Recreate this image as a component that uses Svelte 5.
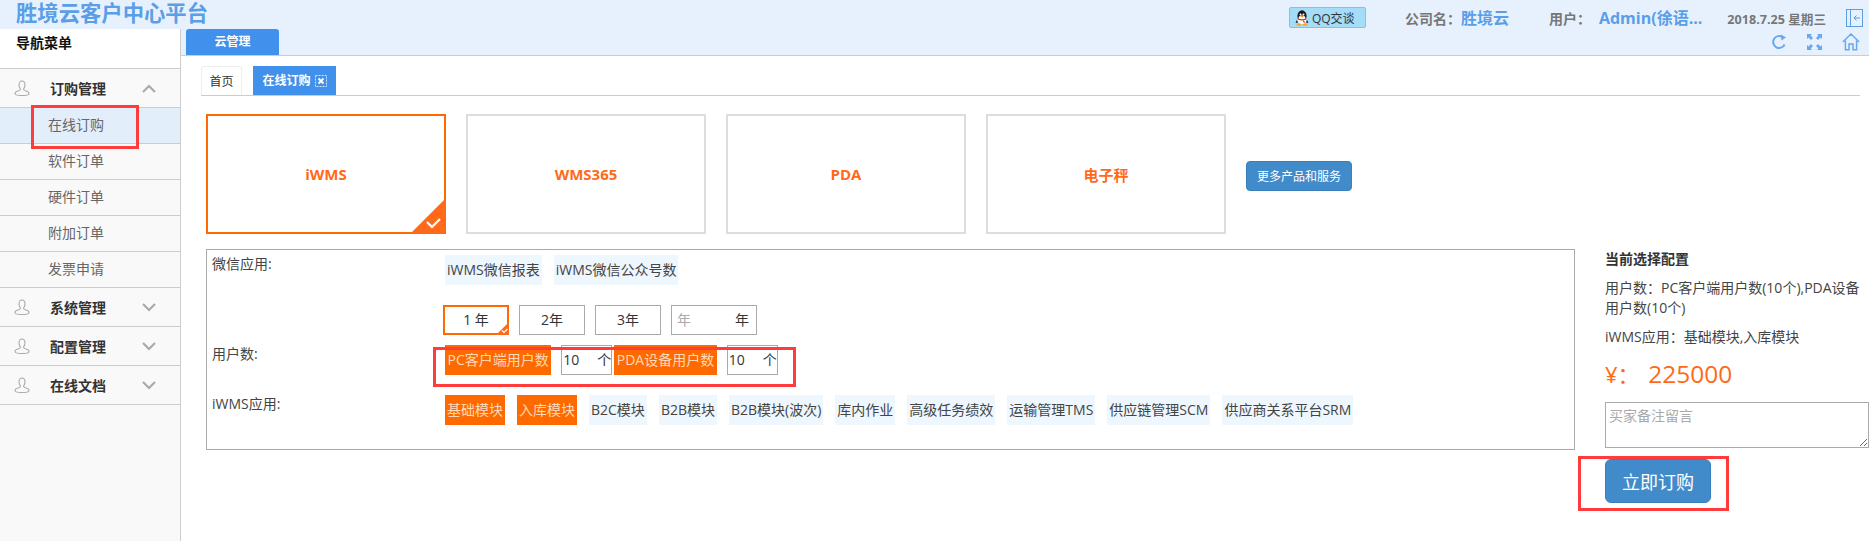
<script>
  const menu = [
    { label: '订购管理', open: true, items: ['在线订购', '软件订单', '硬件订单', '附加订单', '发票申请'] },
    { label: '系统管理', open: false, items: [] },
    { label: '配置管理', open: false, items: [] },
    { label: '在线文档', open: false, items: [] },
  ]
  const products = ['iWMS', 'WMS365', 'PDA', '电子秤']
  const wechat = ['iWMS微信报表', 'iWMS微信公众号数']
  const modules = [
    { name: '基础模块', on: true },
    { name: '入库模块', on: true },
    { name: 'B2C模块' },
    { name: 'B2B模块' },
    { name: 'B2B模块(波次)' },
    { name: '库内作业' },
    { name: '高级任务绩效' },
    { name: '运输管理TMS' },
    { name: '供应链管理SCM' },
    { name: '供应商关系平台SRM' },
  ]
</script>

<div class="app">
  <header class="topbar">
    <h1 class="brand">胜境云客户中心平台</h1>
    <div class="topinfo">
      <button class="qq">
        <svg width="14" height="16" viewBox="0 0 14 16">
          <ellipse cx="7" cy="6" rx="4.6" ry="5.8" fill="#1a1a1a" />
          <ellipse cx="7" cy="10" rx="3.8" ry="4.4" fill="#fff" />
          <path d="M1.8 10 L.6 13 L3 12.6 Z M12.2 10 L13.4 13 L11 12.6 Z" fill="#1a1a1a" />
          <path d="M2.6 8 Q7 10.4 11.4 8 L11.2 9.6 Q7 11.6 2.8 9.6 Z M8.6 10 L10.4 13 L8 12 Z" fill="#e02a1c" />
          <ellipse cx="4" cy="14.6" rx="2.6" ry="1.2" fill="#f5a623" />
          <ellipse cx="10" cy="14.6" rx="2.6" ry="1.2" fill="#f5a623" />
          <circle cx="5.5" cy="4.6" r="1" fill="#fff" />
          <circle cx="8.5" cy="4.6" r="1" fill="#fff" />
          <ellipse cx="7" cy="6.6" rx="1.6" ry=".8" fill="#f5a623" />
        </svg>
        QQ交谈
      </button>
      <span class="key company">公司名：</span><span class="val">胜境云</span>
      <span class="key user">用户：</span><span class="val admin">Admin(徐语...</span>
      <span class="date">2018.7.25 星期三</span>
      <svg class="logout" width="17" height="18" viewBox="0 0 17 18" fill="none" stroke="#5b9ee8">
        <rect x=".5" y=".5" width="16" height="17" />
        <path d="M4.5 .5 V17.5" />
        <path d="M14 9 H8 M10.5 6.5 L8 9 L10.5 11.5" />
      </svg>
    </div>
  </header>

  <aside class="sidebar">
    <div class="nav-title">导航菜单</div>
    {#each menu as group}
      <div class="group">
        <svg class="person" width="16" height="16" viewBox="0 0 16 16" fill="none" stroke="#aaa" stroke-width="1.1">
          <path d="M5 5 C5 2.6 6.2 1 8 1 C9.8 1 11 2.6 11 5 C11 7 10 8 9.6 9 C9.4 10 10.4 10.6 12 11 C14 11.5 15 12.2 15 13.4 C15 15 12 15.5 8 15.5 C4 15.5 1 15 1 13.4 C1 12.2 2 11.5 4 11 C5.6 10.6 6.6 10 6.4 9 C6 8 5 7 5 5 Z" />
        </svg>
        <span class="group-label">{group.label}</span>
        <svg class="chev" width="14" height="9" viewBox="0 0 14 9" fill="none" stroke="#aaa" stroke-width="2.2">
          {#if group.open}
            <path d="M1 8 L7 2 L13 8" />
          {:else}
            <path d="M1 1 L7 7 L13 1" />
          {/if}
        </svg>
      </div>
      {#each group.items as item, i}
        <div class="subitem" class:active={i === 0}>{item}</div>
      {/each}
    {/each}
    <div class="mark mark-nav"></div>
  </aside>

  <main class="main">
    <div class="tabbar">
      <div class="tab">云管理</div>
      <div class="tools">
        <svg width="16" height="16" viewBox="0 0 16 16" fill="none" stroke="#6aa8ee" stroke-width="2">
          <path d="M13.6 10.5 A6 6 0 1 1 11.5 3" />
          <path d="M10 .5 L15 3.5 L10.4 6.6 Z" fill="#6aa8ee" stroke="none" />
        </svg>
        <svg width="15" height="16" viewBox="0 0 15 16" fill="#6aa8ee">
          <path d="M0 0 H5 L3.6 1.6 L6 4 L4 6 L1.6 3.6 L0 5 Z" />
          <path d="M15 0 H10 L11.4 1.6 L9 4 L11 6 L13.4 3.6 L15 5 Z" />
          <path d="M0 16 H5 L3.6 14.4 L6 12 L4 10 L1.6 12.4 L0 11 Z" />
          <path d="M15 16 H10 L11.4 14.4 L9 12 L11 10 L13.4 12.4 L15 11 Z" />
        </svg>
        <svg width="18" height="18" viewBox="0 0 18 18" fill="none" stroke="#6aa8ee" stroke-width="1.5">
          <path d="M.8 9 L9 1 L17.2 9 M3.4 7.4 V16.8 H7 V11 H11 V16.8 H14.6 V7.4" />
        </svg>
      </div>
    </div>

    <div class="content">
      <nav class="subtabs">
        <div class="subtab">首页</div>
        <div class="subtab current">
          在线订购
          <svg width="12" height="12" viewBox="0 0 12 12" fill="none">
            <rect x=".5" y=".5" width="11" height="11" stroke="#cfe1f8" stroke-dasharray="2 1" />
            <path d="M3.5 3.5 L8.5 8.5 M8.5 3.5 L3.5 8.5" stroke="#fff" stroke-width="1.8" />
          </svg>
        </div>
      </nav>

      <div class="products">
        {#each products as p, i}
          <div class="product" class:picked={i === 0}>
            {p}
            {#if i === 0}
              <svg class="corner" width="36" height="36" viewBox="0 0 36 36">
                <polygon points="36,0 36,36 0,36" fill="#ff6a1a" />
                <path d="M17 24 L22 29 L30 21" fill="none" stroke="#fff" stroke-width="2.2" />
              </svg>
            {/if}
          </div>
        {/each}
        <button class="btn more">更多产品和服务</button>
      </div>

      <div class="order">
        <section class="form">
          <div class="row row-wechat">
            <div class="label">微信应用:</div>
            <div class="opts">
              {#each wechat as w}
                <span class="chip">{w}</span>
              {/each}
            </div>
          </div>

          <div class="row row-years">
            <div class="label"></div>
            <div class="opts years">
              <span class="year picked">
                1 年
                <svg class="corner" width="13" height="13" viewBox="0 0 13 13">
                  <polygon points="13,0 13,13 0,13" fill="#ff6a1a" />
                  <path d="M6 8.5 L8 10.5 L11.5 7" fill="none" stroke="#fff" stroke-width="1.2" />
                </svg>
              </span>
              <span class="year">2年</span>
              <span class="year">3年</span>
              <span class="year custom"><i>年</i><b>年</b></span>
            </div>
          </div>

          <div class="row row-users">
            <div class="label">用户数:</div>
            <div class="opts users">
              <span class="chip on">PC客户端用户数</span>
              <span class="count first"><i>10</i><b>个</b></span>
              <span class="chip on pda">PDA设备用户数</span>
              <span class="count"><i>10</i><b>个</b></span>
            </div>
            <div class="mark mark-users"></div>
          </div>

          <div class="row row-modules">
            <div class="label">iWMS应用:</div>
            <div class="opts">
              {#each modules as m}
                <span class="chip" class:on={m.on}>{m.name}</span>
              {/each}
            </div>
          </div>
        </section>

        <section class="summary">
          <h4>当前选择配置</h4>
          <p>用户数：PC客户端用户数(10个),PDA设备用户数(10个)</p>
          <p>iWMS应用：基础模块,入库模块</p>
          <div class="price">¥： <span>225000</span></div>
          <textarea placeholder="买家备注留言"></textarea>
          <div class="buy">
            <button class="btn now">立即订购</button>
            <div class="mark mark-buy"></div>
          </div>
        </section>
      </div>
    </div>
  </main>
</div>

<style>
  :global(html), :global(body) {
    margin: 0;
    overflow: hidden;
  }

  .app {
    display: grid;
    grid-template-columns: 181px 1fr;
    grid-template-rows: 29px 512px;
    width: 1869px;
    height: 541px;
    overflow: hidden;
    background: #fff;
    color: #333;
    font-family: "Open Sans", "Noto Sans CJK SC", sans-serif;
    font-size: 14px;
  }

  /* top bar */
  .topbar {
    grid-column: 1 / 3;
    display: flex;
    justify-content: space-between;
    background: #e6f1fd;
  }

  .brand {
    margin: 0 0 0 16px;
    font-size: 21.33px;
    line-height: 26px;
    font-weight: 700;
    color: #5b9ee8;
  }

  .topinfo {
    display: flex;
    align-items: center;
    height: 36px;
    padding-right: 6px;
    color: #777;
    font-weight: 700;
    font-size: 14px;
  }

  .qq {
    display: flex;
    align-items: center;
    gap: 3px;
    width: 77px;
    height: 21px;
    padding: 0 0 0 5px;
    margin-top: -1px;
    box-sizing: border-box;
    border: 1px solid #7cc4ea;
    border-radius: 2px;
    background: #a5dcf8;
    color: #333;
    font: 12px "Open Sans", "Noto Sans CJK SC", sans-serif;
    white-space: nowrap;
  }

  .key {
    margin-top: -1px;
  }

  .company {
    margin-left: 39px;
  }

  .user {
    margin-left: 40px;
  }

  .val {
    color: #5b9ee8;
    font-size: 16px;
    margin-top: -2px;
    white-space: nowrap;
  }

  .admin {
    margin-left: 8px;
  }

  .date {
    margin-left: 25px;
    font-size: 12.6px;
    white-space: nowrap;
  }

  .logout {
    margin-left: 20px;
  }

  /* sidebar */
  .sidebar {
    position: relative;
    background: #f9f9f9;
    border-right: 1px solid #ccc;
  }

  .nav-title {
    box-sizing: border-box;
    height: 40px;
    padding: 4px 0 0 16px;
    background: #fff;
    border-bottom: 1px solid #ccc;
    color: #111;
    font-weight: 700;
    font-size: 14px;
    line-height: 20px;
  }

  .group {
    display: flex;
    align-items: center;
    box-sizing: border-box;
    height: 39px;
    padding-left: 14px;
    border-bottom: 1px solid #ccc;
  }

  .group-label {
    margin-left: 20px;
    width: 92px;
    font-weight: 700;
    color: #333;
  }

  .subitem {
    box-sizing: border-box;
    height: 36px;
    padding-left: 48px;
    border-bottom: 1px solid #ccc;
    color: #666;
    line-height: 34px;
  }

  .subitem.active {
    background: #e3eefb;
  }

  .mark {
    position: absolute;
    box-sizing: border-box;
    border: 3px solid #ff3b3b;
    pointer-events: none;
  }

  .mark-nav {
    left: 31px;
    top: 76px;
    width: 108px;
    height: 44px;
  }

  /* main */
  .main {
    min-width: 0;
  }

  .tabbar {
    display: flex;
    justify-content: space-between;
    box-sizing: border-box;
    height: 27px;
    padding-left: 5px;
    background: #e6f1fd;
    border-bottom: 1px solid #ccc;
  }

  .tab {
    width: 93px;
    height: 26px;
    border-radius: 3px 3px 0 0;
    background: #4191ec;
    color: #fff;
    font-size: 12px;
    font-weight: 700;
    line-height: 26px;
    text-align: center;
  }

  .tools {
    display: flex;
    align-items: center;
    gap: 20px;
    height: 24px;
    padding: 0 9px 0 0;
    margin-top: 1px;
  }

  .content {
    padding: 10px 0 0 20px;
  }

  .subtabs {
    display: flex;
    gap: 11px;
    width: 1659px;
    height: 29px;
    border-bottom: 1px solid #ccc;
  }

  .subtab {
    width: 41px;
    height: 29px;
    box-sizing: border-box;
    border: 1px solid #eee;
    border-bottom: 0;
    border-radius: 3px 3px 0 0;
    background: #fff;
    color: #333;
    font-size: 12px;
    line-height: 29px;
    text-align: center;
  }

  .subtab.current {
    display: flex;
    align-items: center;
    justify-content: center;
    gap: 4px;
    width: 83px;
    border: 0;
    border-radius: 0;
    background: #4191ec;
    color: #fff;
    font-weight: 700;
  }

  .products {
    display: flex;
    gap: 20px;
    margin: 18px 0 0 5px;
  }

  .product {
    position: relative;
    display: flex;
    align-items: center;
    justify-content: center;
    box-sizing: border-box;
    width: 240px;
    height: 120px;
    border: 2px solid #ddd;
    color: #ff6a1a;
    font-size: 15px;
    font-weight: 700;
  }

  .product.picked {
    border-color: #ff6a00;
  }

  .corner {
    position: absolute;
    right: -2px;
    bottom: -2px;
  }

  .btn {
    border: 1px solid #3a80bd;
    background: #428bca;
    color: #fff;
    font-family: inherit;
    padding: 0;
  }

  .more {
    align-self: center;
    width: 106px;
    height: 30px;
    margin-top: 4px;
    border-radius: 4px;
    font-size: 12px;
  }

  .order {
    display: flex;
    gap: 30px;
    margin: 15px 0 0 5px;
  }

  .form {
    box-sizing: border-box;
    width: 1369px;
    height: 201px;
    padding: 5px 0 0 5px;
    border: 1px solid #aaa;
  }

  .row {
    position: relative;
    display: flex;
  }

  .row-years {
    margin-top: 20px;
  }

  .row-users {
    margin-top: 10px;
  }

  .row-modules {
    margin-top: 20px;
  }

  .label {
    width: 233px;
    flex: none;
    color: #444;
    font-size: 14px;
    line-height: 18px;
  }

  .opts {
    display: flex;
    gap: 12px;
    height: 30px;
    white-space: nowrap;
  }

  .chip {
    box-sizing: border-box;
    height: 30px;
    padding: 0 2px;
    background: #eef6fe;
    color: #444;
    font-size: 14px;
    line-height: 30px;
  }

  .chip.on {
    background: #ff6a00;
    color: #ffd9b8;
  }

  .years {
    gap: 10px;
    margin-left: -2px;
  }

  .year {
    position: relative;
    box-sizing: border-box;
    width: 66px;
    height: 30px;
    border: 1px solid #aaa;
    color: #333;
    line-height: 28px;
    text-align: center;
  }

  .year.picked {
    border: 2px solid #ff6a00;
    line-height: 26px;
  }

  .custom {
    display: flex;
    justify-content: space-between;
    width: 86px;
    padding: 0 7px 0 5px;
  }

  .custom i, .count i {
    font-style: normal;
  }

  .custom i {
    color: #aaa;
  }

  .custom b, .count b {
    font-weight: 400;
  }

  .users {
    gap: 10px;
  }

  .users .chip {
    padding: 0 2.5px;
  }

  .count {
    display: flex;
    justify-content: space-between;
    box-sizing: border-box;
    width: 51px;
    height: 30px;
    padding: 0 0 0 1px;
    border: 1px solid #aaa;
    color: #333;
    line-height: 28px;
  }

  .count.first {
    margin-right: -8px;
  }

  .mark-users {
    left: 221px;
    top: 2px;
    width: 363px;
    height: 40px;
  }

  /* summary */
  .summary {
    width: 264px;
    flex: none;
    color: #444;
    font-size: 14px;
    line-height: 20px;
  }

  .summary h4 {
    margin: 0;
    color: #333;
    font-size: 14px;
    font-weight: 700;
  }

  .summary p {
    margin: 9px 0 0;
  }

  .price {
    margin-top: 10px;
    color: #ff6a1a;
    font-size: 22px;
    line-height: 34px;
    white-space: nowrap;
  }

  .price span {
    margin-left: 3px;
    font-size: 24.5px;
  }

  textarea {
    display: block;
    box-sizing: border-box;
    width: 264px;
    height: 46px;
    margin: 11px 0 0;
    padding: 2px 3px;
    border: 1px solid #aaa;
    border-radius: 0;
    outline: 0;
    font-family: inherit;
    font-size: 14px;
  }

  textarea::placeholder {
    color: #aaa;
  }

  .buy {
    position: relative;
    margin-top: 11px;
  }

  .now {
    display: block;
    width: 106px;
    height: 44px;
    border-radius: 6px;
    font-size: 18px;
  }

  .mark-buy {
    left: -27px;
    top: -3px;
    width: 151px;
    height: 55px;
  }
</style>
